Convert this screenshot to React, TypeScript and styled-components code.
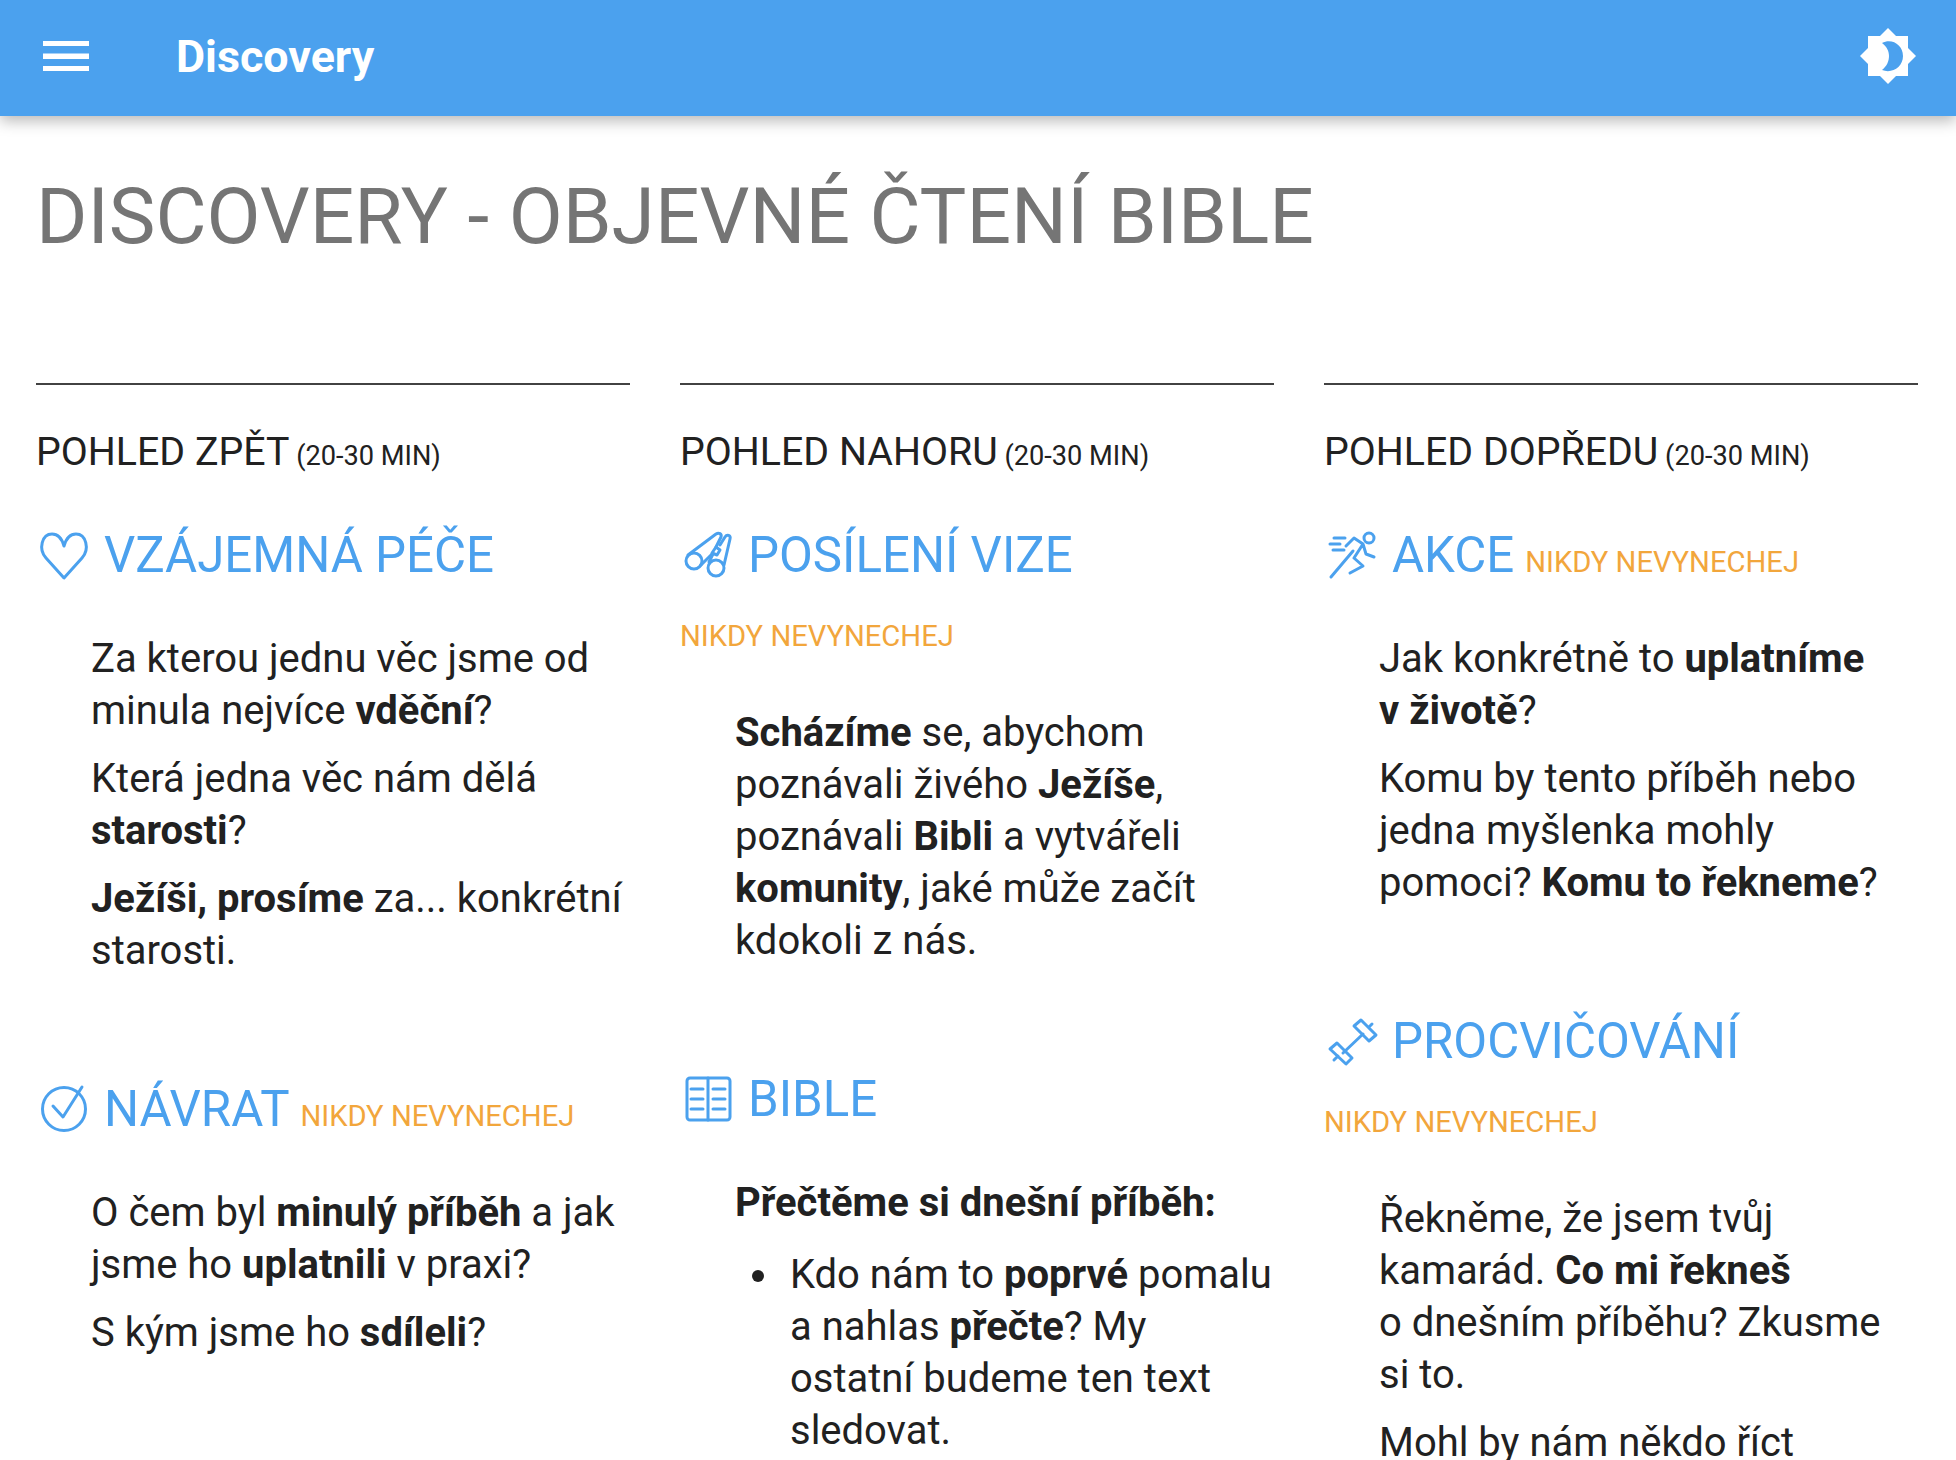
import React from "react";
import styled, { createGlobalStyle } from "styled-components";

const Global = createGlobalStyle`
  html, body { margin: 0; padding: 0; background: #fff; overflow: hidden; }
  body { font-family: Roboto, "Noto Sans", sans-serif; color: #212121; }
`;
const Page = styled.div`
  width: 1956px;
  height: 1460px;
  overflow: hidden;
  position: relative;
`;
const TopBar = styled.header`
  height: 116px;
  box-sizing: border-box;
  background: #4ba1ee;
  display: flex;
  align-items: center;
  padding: 0 40px 4px 42px;
  box-shadow: 0 5px 14px rgba(0, 0, 0, 0.28);
  position: relative;
  color: #fff;
`;
const Menu = styled.svg`
  width: 48px;
  height: 32px;
  flex: none;
`;
const BarTitle = styled.div`
  margin-left: 86px;
  font-size: 44.8px;
  font-weight: 700;
  flex: 1;
`;
const Main = styled.main`
  padding: 0 38px 0 36px;
`;
const Title = styled.h1`
  margin: 42px 0 0;
  font-size: 78.5px;
  line-height: 116px;
  font-weight: 400;
  color: #757575;
`;
const Columns = styled.div`
  margin-top: 109px;
  display: grid;
  grid-template-columns: repeat(3, 594px);
  column-gap: 50px;
`;
const Column = styled.section`
  border-top: 2px solid #424242;
  padding-top: 44px;
`;
const Period = styled.div`
  font-size: 39.3px;
  line-height: 47px;
  small { font-size: 27.2px; }
`;
const Heading = styled.h2<{ $gap?: number }>`
  margin: ${(p) => p.$gap ?? 43}px 0 0;
  display: flex;
  flex-wrap: wrap;
  align-items: baseline;
  font-size: 49.2px;
  line-height: 64px;
  font-weight: 400;
  color: #4ba1ee;
`;
const HeadIcon = styled.svg`
  width: 56px;
  height: 56px;
  margin-right: 12px;
  align-self: center;
  fill: none;
  stroke: #4ba1ee;
  stroke-width: 3;
  stroke-linecap: round;
  stroke-linejoin: round;
`;
const Never = styled.span<{ $block?: boolean }>`
  font-size: 29.2px;
  line-height: 30px;
  color: #f2a63c;
  margin-left: ${(p) => (p.$block ? 0 : 11)}px;
  ${(p) => p.$block && "display:block; flex-basis:100%; margin-top: 29px; line-height: 40px; margin-bottom: 5px;"}
`;
const Body = styled.div`
  padding-left: 55px;
  margin-top: 46px;
  font-size: 39.98px;
  line-height: 52px;
`;
const P = styled.p`
  margin: 0 0 16px;
`;
const List = styled.ul`
  margin: 0;
  padding-left: 55px;
  list-style: none;
`;
const Item = styled.li`
  position: relative;
  &::before {
    content: "";
    position: absolute;
    left: -38px;
    top: 21px;
    width: 12px;
    height: 12px;
    border-radius: 50%;
    background: #212121;
  }
`;
const Lead = styled(P)`
  margin-bottom: 20px;
`;
const Sun = () => (
  <svg width="56" height="58" viewBox="0 0 56 58">
    <path fill="#fff" d="M28 1 L36 9 H48 V21 L56 29 L48 37 V49 H36 L28 57 L20 49 H8 V37 L0 29 L8 21 V9 H20 Z" />
    <path fill="#4ba1ee" d="M22 16 C32 11 43 18 43 29 C43 40 32 47 22 43 C27 39 29 34 29 29 C29 24 27 20 22 16 Z" />
  </svg>
);
const Heart = () => (
  <HeadIcon viewBox="0 0 56 56">
    <path d="M28 51 L10 31 C2 22 6 7 16 7 C22 7 26 12 28 19 C30 12 34 7 40 7 C50 7 54 22 46 31 Z" />
  </HeadIcon>
);
const Check = () => (
  <HeadIcon viewBox="0 0 56 56">
    <circle cx="28" cy="28" r="21.5" />
    <path d="M17 25 L27 36 L46 6" />
  </HeadIcon>
);
const Binoculars = () => (
  <HeadIcon viewBox="0 0 56 56">
    <circle cx="14" cy="34" r="8" />
    <circle cx="36" cy="41" r="8" />
    <path d="M8 28 L36 7 C39 5 42 7 41 10 L36 20 M32 27 L21 38" />
    <path d="M44 38 L50 12 C51 8 47 7 45 10 L40 18 M33 27 L29 35" />
    <path d="M36 20 L40 23 L37 28 L32 26 Z" />
  </HeadIcon>
);
const BookIcon = () => (
  <HeadIcon viewBox="0 0 56 56">
    <rect x="7" y="7" width="43" height="42" rx="3" />
    <path d="M28 7v42M11 18h12M11 28h12M11 38h12M33 18h12M33 28h12M33 38h12" />
  </HeadIcon>
);
const Runner = () => (
  <HeadIcon viewBox="0 0 56 56">
    <circle cx="45" cy="11" r="5" />
    <path d="M22 19 L30 11 L39 17 L30 31 M7 50 L29 24 M39 17 L42 27 L50 30 M30 31 L39 39 L26 46 M10 11h11M6 17h10M9 23h11" />
  </HeadIcon>
);
const Dumbbell = () => (
  <HeadIcon viewBox="0 0 56 56">
    <path d="M19 40 L39 21" />
    <path d="M30 13 L37 7 L52 22 L45 28 Z M44.500 14.500 L48 11" />
    <path d="M6 36 L13 30 L28 45 L22 51 Z M14 43 L10 47" />
  </HeadIcon>
);

export default function App() {
  return (
    <Page>
      <Global />
      <TopBar>
        <Menu viewBox="0 0 48 32">
          <path fill="#fff" d="M1 1h46v5H1zM1 13.500h46v5.500H1zM1 26h46v5H1z" />
        </Menu>
        <BarTitle>Discovery</BarTitle>
        <Sun />
      </TopBar>
      <Main>
        <Title>DISCOVERY - OBJEVNÉ ČTENÍ BIBLE</Title>
        <Columns>
          <Column>
            <Period>POHLED ZPĚT<small> (20-30 MIN)</small></Period>
            <Heading><Heart />VZÁJEMNÁ PÉČE</Heading>
            <Body>
              <P>Za kterou jednu věc jsme od minula nejvíce <b>vděční</b>?</P>
              <P>Která jedna věc nám dělá <b>starosti</b>?</P>
              <P><b>Ježíši, prosíme</b> za... konkrétní starosti.</P>
            </Body>
            <Heading $gap={100}><Check />NÁVRAT<Never>NIKDY NEVYNECHEJ</Never></Heading>
            <Body>
              <P>O čem byl <b>minulý příběh</b> a jak jsme ho <b>uplatnili</b> v praxi?</P>
              <P>S kým jsme ho <b>sdíleli</b>?</P>
            </Body>
          </Column>
          <Column>
            <Period>POHLED NAHORU<small> (20-30 MIN)</small></Period>
            <Heading><Binoculars />POSÍLENÍ VIZE<Never $block>NIKDY NEVYNECHEJ</Never></Heading>
            <Body>
              <P><b>Scházíme</b> se, abychom poznávali živého <b>Ježíše</b>, poznávali <b>Bibli</b> a vytvářeli <b>komunity</b>, jaké může začít kdokoli z nás.</P>
            </Body>
            <Heading $gap={100}><BookIcon />BIBLE</Heading>
            <Body>
              <Lead><b>Přečtěme si dnešní příběh:</b></Lead>
              <List>
                <Item>Kdo nám to <b>poprvé</b> pomalu a&nbsp;nahlas <b>přečte</b>? My ostatní budeme ten text sledovat.</Item>
              </List>
            </Body>
          </Column>
          <Column>
            <Period>POHLED DOPŘEDU<small> (20-30 MIN)</small></Period>
            <Heading><Runner />AKCE<Never>NIKDY NEVYNECHEJ</Never></Heading>
            <Body>
              <P>Jak konkrétně to <b>uplatníme v&nbsp;životě</b>?</P>
              <P>Komu by tento příběh nebo jedna myšlenka mohly pomoci? <b>Komu to řekneme</b>?</P>
            </Body>
            <Heading $gap={100}><Dumbbell />PROCVIČOVÁNÍ<Never $block>NIKDY NEVYNECHEJ</Never></Heading>
            <Body>
              <P>Řekněme, že jsem tvůj kamarád. <b>Co mi řekneš</b> o&nbsp;dnešním příběhu? Zkusme si to.</P>
              <P>Mohl by nám někdo říct</P>
            </Body>
          </Column>
        </Columns>
      </Main>
    </Page>
  );
}
